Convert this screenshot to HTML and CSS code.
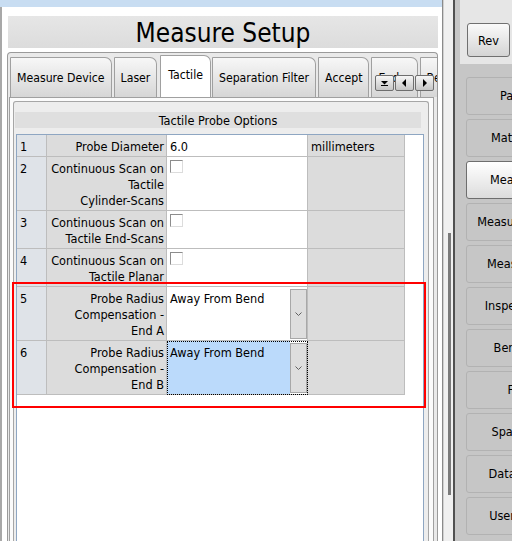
FILE: index.html
```html
<!DOCTYPE html>
<html lang="en">
<head>
  <meta charset="UTF-8">
  <title>Measure Setup</title>
  <link rel="stylesheet" href="styles.css">
</head>
<body>
  <div class="app">
    <!-- Left: setup window -->
    <div class="main">
      <div class="caption-strip"></div>
      <div class="window">
        <h1 class="title">Measure Setup</h1>

        <div class="tab-control">
          <div class="tab-strip">
            <div class="tab">Measure Device</div>
            <div class="tab">Laser</div>
            <div class="tab active">Tactile</div>
            <div class="tab">Separation Filter</div>
            <div class="tab">Accept</div>
            <div class="tab">Ender</div>
            <div class="tab">Bend</div>
          </div>

          <!-- tab scroll buttons sit over the last tabs -->
          <div class="tab-scroll">
            <button class="scroll-btn">
              <svg width="9" height="7" viewBox="0 0 9 7"><path d="M1 1h7L4.5 4.5z" fill="#000"/><rect x="1" y="5" width="7" height="1" fill="#000"/></svg>
            </button>
            <button class="scroll-btn">
              <svg width="5" height="8" viewBox="0 0 5 8"><path d="M4 0v8L0 4z" fill="#000"/></svg>
            </button>
            <button class="scroll-btn">
              <svg width="5" height="8" viewBox="0 0 5 8"><path d="M1 0v8l4-4z" fill="#000"/></svg>
            </button>
          </div>

          <div class="tab-page">
            <div class="group">
              <div class="group-header">Tactile Probe Options</div>
              <div class="grid">
                <div class="row">
                  <div class="cell num">1</div>
                  <div class="cell label">Probe Diameter</div>
                  <div class="cell value">6.0</div>
                  <div class="cell unit">millimeters</div>
                </div>
                <div class="row">
                  <div class="cell num">2</div>
                  <div class="cell label">Continuous Scan on<br>Tactile<br>Cylinder-Scans</div>
                  <div class="cell value"><span class="check"></span></div>
                  <div class="cell unit"></div>
                </div>
                <div class="row">
                  <div class="cell num">3</div>
                  <div class="cell label">Continuous Scan on<br>Tactile End-Scans</div>
                  <div class="cell value"><span class="check"></span></div>
                  <div class="cell unit"></div>
                </div>
                <div class="row clipped">
                  <div class="cell num">4</div>
                  <div class="cell label">Continuous Scan on<br>Tactile Planar</div>
                  <div class="cell value"><span class="check"></span></div>
                  <div class="cell unit"></div>
                </div>

                <div class="marked">
                  <div class="row">
                    <div class="cell num">5</div>
                    <div class="cell label">Probe Radius<br>Compensation -<br>End A</div>
                    <div class="cell value combo">
                      <span class="combo-text">Away From Bend</span>
                      <span class="combo-btn"><svg width="7" height="4" viewBox="0 0 7 4"><path d="M0.5 0.5l3 3 3-3" fill="none" stroke="#606060"/></svg></span>
                    </div>
                    <div class="cell unit"></div>
                  </div>
                  <div class="row">
                    <div class="cell num">6</div>
                    <div class="cell label">Probe Radius<br>Compensation -<br>End B</div>
                    <div class="cell value combo focused">
                      <span class="combo-text">Away From Bend</span>
                      <span class="combo-btn"><svg width="7" height="4" viewBox="0 0 7 4"><path d="M0.5 0.5l3 3 3-3" fill="none" stroke="#606060"/></svg></span>
                    </div>
                    <div class="cell unit"></div>
                  </div>
                </div>
              </div>
            </div>
          </div>
        </div>
      </div>
    </div>

    <!-- splitter between the window and the side menu -->
    <div class="splitter"><div class="grip"></div></div>

    <!-- Right: navigation -->
    <div class="side">
      <div class="side-top">
        <button class="rev-btn">Rev</button>
      </div>
      <div class="nav">
        <div class="nav-btn">Parts</div>
        <div class="nav-btn">Material</div>
        <div class="nav-btn current">Measure</div>
        <div class="nav-btn">Measure Ops</div>
        <div class="nav-btn">Measures</div>
        <div class="nav-btn">Inspection</div>
        <div class="nav-btn">Bender</div>
        <div class="nav-btn">Fit</div>
        <div class="nav-btn">Spacing</div>
        <div class="nav-btn">Data Log</div>
        <div class="nav-btn">User Log</div>
      </div>
    </div>
  </div>
</body>
</html>
```

FILE: styles.css
```css
* {
  box-sizing: border-box;
}
body {
  margin: 0;
  padding: 0;
  background-color: #f0f0f0;
  color: #000;
  font-family: "DejaVu Sans Condensed", "DejaVu Sans", sans-serif;
  font-size: 12.6px;
}
.app {
  display: flex;
  width: 512px;
  height: 541px;
  overflow: hidden;
}

/* --- left window --- */
.main {
  display: flex;
  flex-direction: column;
  width: 443px;
  border-right: 1px solid #8a8a8a;
}
.caption-strip {
  height: 7px;
  background-color: #c8ddf2;
}
.window {
  flex: 1;
  display: flex;
  flex-direction: column;
  min-height: 0;
  background-color: #fff;
  border-left: 2px solid #a8a8a8;
}
.title {
  margin: 9px 4px 0 6px;
  height: 32px;
  background: linear-gradient(#e6e6e6, #dcdcdc);
  font-size: 26px;
  font-weight: normal;
  line-height: 34px;
  text-align: center;
}

/* --- tabs --- */
.tab-control {
  position: relative;
  flex: 1;
  display: flex;
  flex-direction: column;
  min-height: 0;
  margin: 4px 4px 0 5px;
  background-color: #e9e9e9;
  border: 1px solid #9a9a9a;
  border-bottom: none;
  border-radius: 4px 4px 0 0;
}
.tab-strip {
  display: flex;
  height: 44px;
  padding: 2px 0 0 2px;
  overflow: hidden;
  font-size: 12.2px;
}
.tab {
  flex-shrink: 0;
  height: 40px;
  margin: 2px 2px 0 0;
  padding: 0 6px;
  line-height: 40px;
  white-space: nowrap;
  background: linear-gradient(#f7f7f7, #d6d6d6);
  border: 1px solid #a0a0a0;
  border-bottom: none;
  border-radius: 1px 7px 0 0;
}
.tab.active {
  height: 42px;
  margin: 0 1px 0 1px;
  padding: 0 7px;
  line-height: 38px;
  background: #fff;
  position: relative;
  z-index: 1;
}
.tab-scroll {
  position: absolute;
  top: 22px;
  right: 3px;
  display: flex;
  gap: 1px;
  z-index: 2;
}
.scroll-btn {
  display: flex;
  align-items: center;
  justify-content: center;
  width: 19px;
  height: 16px;
  padding: 0;
  background: linear-gradient(#f6f6f6, #c6c6c6);
  border: 1px solid #6e6e6e;
  border-radius: 2px;
}
.tab-page {
  flex: 1;
  display: flex;
  flex-direction: column;
  min-height: 0;
  margin: 0 3px 0 1px;
  background-color: #fbfbfb;
  border: 1px solid #a0a0a0;
  border-bottom: none;
}

/* --- option group --- */
.group {
  flex: 1;
  display: flex;
  flex-direction: column;
  min-height: 0;
  margin: 3px 4px 0 3px;
  background-color: #ededed;
  border: 1px solid #a6a6a6;
  border-bottom: none;
  border-radius: 3px 3px 0 0;
}
.group-header {
  height: 16px;
  margin: 10px 7px 0 1px;
  background-color: #dfdfdf;
  line-height: 17px;
  text-align: center;
}
.grid {
  flex: 1;
  margin: 6px 4px 0 2px;
  background-color: #fff;
  border: 1px solid #8ea6c2;
  border-bottom: none;
}
.row {
  display: grid;
  grid-template-columns: 30px 120px 141px 97px;
  line-height: 16px;
}
.cell {
  padding: 4px 3px 1px;
  white-space: nowrap;
  border-right: 1px solid #bdbdbd;
  border-bottom: 1px solid #bdbdbd;
}
.row.clipped .cell {
  height: 38px;
  overflow: hidden;
}
.cell.num {
  background-color: #dfe3e8;
}
.cell.label {
  background-color: #dcdcdc;
  text-align: right;
  padding-right: 2px;
}
.cell.unit {
  background-color: #dcdcdc;
}
.check {
  display: block;
  width: 13px;
  height: 13px;
  margin-top: -1px;
  background-color: #fff;
  border: 1px solid #8c8c8c;
  border-right-color: #dcdcdc;
  border-bottom-color: #dcdcdc;
}

/* combo box cells */
.cell.combo {
  display: flex;
  padding: 0;
}
.combo-text {
  flex: 1;
  padding: 4px 3px 0;
}
.combo-btn {
  display: flex;
  align-items: center;
  justify-content: center;
  width: 17px;
  margin: 2px 0 1px;
  background-color: #dedede;
  border: 1px solid #a8a8a8;
}
.cell.focused {
  outline: 1px dotted #000;
  outline-offset: -1px;
}
.cell.focused .combo-text {
  background-color: #bbdafb;
}

/* red annotation around rows 5-6 */
.marked {
  position: relative;
}
.marked::after {
  content: "";
  position: absolute;
  top: -5px;
  bottom: -13px;
  left: -5px;
  right: -3px;
  border: 2px solid #ff0000;
}

/* --- splitter --- */
.splitter {
  width: 12px;
  background-color: #f0f0f0;
  border-left: 1px solid #d0d0d0;
  border-right: 2px solid #505050;
}
.grip {
  width: 3px;
  height: 262px;
  margin: 233px 0 0 4px;
  background-image: radial-gradient(#7a7a7a 0.8px, transparent 0.9px);
  background-size: 2px 2px;
}

/* --- right side menu --- */
.side {
  flex: 1;
  min-width: 0;
  background-color: #c6c6c6;
  overflow: hidden;
}
.side-top {
  height: 64px;
  margin-left: 5px;
  padding: 23px 0 0 7px;
  background-color: #e6e6e6;
}
.rev-btn {
  width: 43px;
  height: 34px;
  padding: 0;
  font-family: inherit;
  font-size: 12.6px;
  background: linear-gradient(#fafafa, #d4d4d4);
  border: 1px solid #707070;
  border-radius: 3px;
}
.nav {
  display: flex;
  flex-direction: column;
  gap: 4px;
  padding: 13px 0 0 11px;
}
.nav-btn {
  flex-shrink: 0;
  width: 96px;
  height: 38px;
  line-height: 36px;
  text-align: center;
  white-space: nowrap;
  border: 1px solid #b2b2b2;
  border-radius: 3px;
}
.nav-btn.current {
  background: linear-gradient(#ffffff, #dcdcdc);
  border-color: #6e6e6e;
}
```
